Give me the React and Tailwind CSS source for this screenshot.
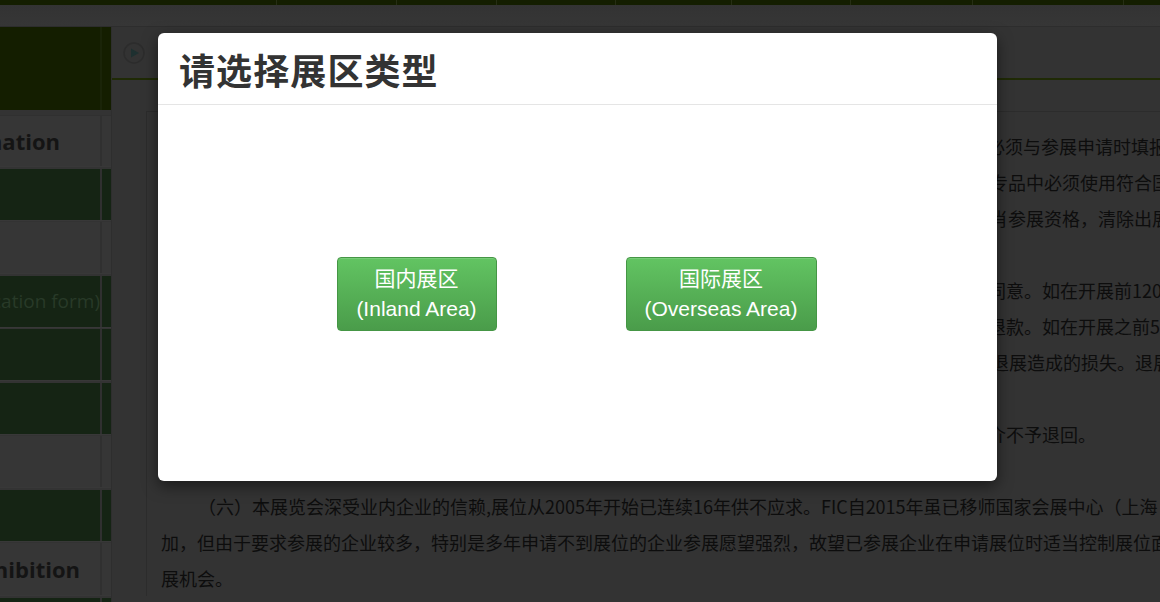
const cjk = { fontFamily: '"Noto Sans CJK SC", "Liberation Sans", sans-serif' };

const navCells = ['w-[277px]', 'w-[120px]', 'w-[100px]', 'w-[119px]', 'w-[116px]', 'w-[119px]', 'w-[122px]', 'w-[151px]'];

const rows = [
  { h: 'h-[51px]', tone: 'gray', text: 'Information', cls: 'pr-[40px] text-[#141414] font-bold text-[22px]' },
  { h: 'h-[52px]', tone: 'green' },
  { h: 'h-[52px]', tone: 'gray' },
  { h: 'h-[52px]', tone: 'green', text: '(application form)', cls: 'text-[#283a28] text-[19px]' },
  { h: 'h-[52px]', tone: 'green', text: ')', cls: 'text-[#223222] text-[14px] pr-[106px]' },
  { h: 'h-[52px]', tone: 'green' },
  { h: 'h-[52px]', tone: 'gray' },
  { h: 'h-[52px]', tone: 'green' },
  { h: 'h-[53px]', tone: 'gray', text: 'Exhibition', cls: 'pr-[20px] text-[#141414] font-bold text-[22px]' },
  { h: 'h-[20px]', tone: 'green' },
];

const lines = [
  { pl: 'pl-[826px]', t: '必须与参展申请时填报' },
  { pl: 'pl-[829px]', t: '专品中必须使用符合国' },
  { pl: 'pl-[829px]', t: '肖参展资格，清除出展' },
  { pl: '', t: '\u00a0' },
  { pl: 'pl-[827px]', t: '同意。如在开展前120' },
  { pl: 'pl-[827px]', t: '退款。如在开展之前5' },
  { pl: 'pl-[830px]', t: '退展造成的损失。退展' },
  { pl: '', t: '\u00a0' },
  { pl: 'pl-[827px]', t: '介不予退回。' },
  { pl: '', t: '\u00a0' },
  { pl: 'pl-[37px]', t: '（六）本展览会深受业内企业的信赖,展位从2005年开始已连续16年供不应求。FIC自2015年虽已移师国家会展中心（上海' },
  { pl: '', t: '加，但由于要求参展的企业较多，特别是多年申请不到展位的企业参展愿望强烈，故望已参展企业在申请展位时适当控制展位面' },
  { pl: '', t: '展机会。' },
];

function SideRow({ row }) {
  const bg = row.tone === 'green' ? 'bg-[#152414]' : 'bg-[#363636]';
  return (
    <div className={`${row.h} ${bg} flex shrink-0 mb-[1.5px] border-b border-[#383838]`}>
      <div className="relative flex-1 min-w-0 flex items-center justify-end overflow-hidden">
        {row.text && <span className={`whitespace-nowrap ${row.cls}`} style={{ fontFamily: '"Open Sans", sans-serif' }}>{row.text}</span>}
      </div>
      <div className="w-[11px] border-l-2 border-[#303030]" />
    </div>
  );
}

export default function App() {
  return (
    <div className="relative w-[1160px] h-[602px] overflow-hidden bg-[#333333]" style={cjk}>
      <div className="h-[5px] bg-[#141e00] flex">
        {navCells.map((w, i) => <div key={i} className={`${w} shrink-0 border-r border-[#262e14]`} />)}
      </div>
      <div className="h-[22px] bg-gradient-to-b from-[#333333] to-[#363636] border-b border-[#2d2d2d]" />
      <div className="flex">
        <aside className="w-[111px] shrink-0">
          <div className="h-[83px] flex bg-[#141e00]">
            <div className="flex-1" />
            <div className="w-[11px] border-l-2 border-[#1a2408]" />
          </div>
          <div className="h-[6px] bg-[#333333] border-b border-[#303030]" />
          {rows.map((r, i) => <SideRow key={i} row={r} />)}
        </aside>
        <main className="flex-1 min-w-0 border-l border-[#2e2e2e]">
          <div className="h-[53px] flex items-center pl-[11px] border-b-2 border-[#1f2a05]">
            <svg width="22" height="22" viewBox="0 0 22 22">
              <circle cx="11" cy="11" r="10" fill="none" stroke="#2c2c2c" strokeWidth="1.5" />
              <path d="M8 6.5 L16 11 L8 15.5 Z" fill="#1e3030" />
            </svg>
          </div>
          <div className="pt-[31px] pl-[34px]">
            <div className="border-l border-t border-[#2c2c2c] pt-[16px] pl-[14px] text-[18px] leading-[36px] text-[#0d0d0d] whitespace-nowrap overflow-hidden">
              {lines.map((l, i) => <div key={i} className={l.pl}>{l.t}</div>)}
            </div>
          </div>
        </main>
      </div>

      <div className="absolute left-[158px] top-[33px] w-[839px] h-[448px] bg-white rounded-[6px] shadow-[0_5px_15px_rgba(0,0,0,0.5)] flex flex-col">
        <div className="h-[72px] shrink-0 border-b border-[#e5e5e5] pl-[21px] flex items-center">
          <h1 className="text-[36px] font-bold text-[#333333] leading-none tracking-[1.1px]">请选择展区类型</h1>
        </div>
        <div className="flex-1 flex items-center justify-center gap-[129px] pt-[1px] pr-[2px]">
          <button className="w-[160px] h-[74px] rounded-[4px] border border-[#459645] bg-gradient-to-b from-[#62c462] to-[#4a9c4a] shadow-[inset_0_1px_0_rgba(255,255,255,0.15)] text-white text-[21px] leading-[30px] text-center" style={{ fontFamily: '"Liberation Sans", "Noto Sans CJK SC", sans-serif' }}>
            国内展区<br />(Inland Area)
          </button>
          <button className="w-[191px] h-[74px] rounded-[4px] border border-[#459645] bg-gradient-to-b from-[#62c462] to-[#4a9c4a] shadow-[inset_0_1px_0_rgba(255,255,255,0.15)] text-white text-[21px] leading-[30px] text-center" style={{ fontFamily: '"Liberation Sans", "Noto Sans CJK SC", sans-serif' }}>
            国际展区<br />(Overseas Area)
          </button>
        </div>
      </div>
    </div>
  );
}
